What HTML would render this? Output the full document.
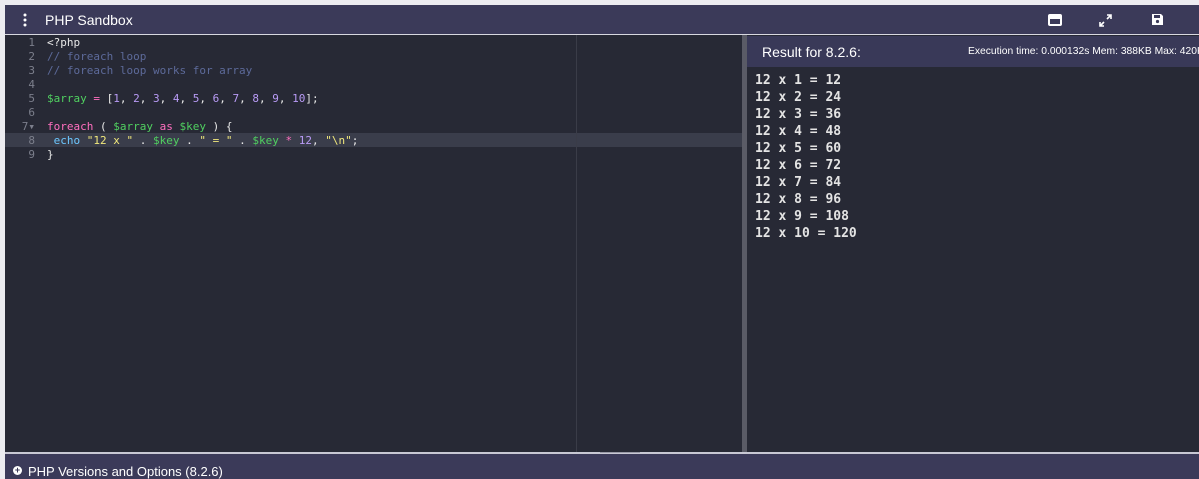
<!DOCTYPE html>
<html><head><style>
body{margin:0;width:1199px;height:477px;background:#ececf0;overflow:hidden;position:relative;font-family:"Liberation Sans",sans-serif}
.hdr{position:absolute;left:5px;top:5px;width:1194px;height:29px;background:#3b3a59;color:#fff}
.hdr .t{position:absolute;left:40px;top:7px;font-size:14px}
.sep{position:absolute;left:5px;top:34px;width:1194px;height:1px;background:#d8d8e0}
.ed{position:absolute;left:5px;top:35px;width:737px;height:417px;background:#272935}
.code{position:absolute;left:0;top:1px;font:11px/14px "DejaVu Sans Mono",monospace;color:#e8e8e8;white-space:pre}
.ln{display:inline-block;width:30px;text-align:right;color:#7c7f8c;margin-right:12px}
.cm{color:#5d6a9a}.v{color:#50d060}.n{color:#b99bf6}.k{color:#ff6fbf}.s{color:#f1e87c}
.hl{position:absolute;left:0;top:98px;width:737px;height:14px;background:#3a3d4b}
.margin{position:absolute;left:571px;top:0;width:1px;height:417px;background:#3a3c48}
.split{position:absolute;left:742px;top:35px;width:5px;height:417px;background:#5a5b66}
.res{position:absolute;left:747px;top:35px;width:452px;height:417px;background:#272935}
.rh{position:absolute;left:0;top:1px;width:452px;height:31px;background:#393958;color:#fff}
.out{position:absolute;left:8px;top:37px;font:bold 13px/17px "DejaVu Sans Mono",monospace;color:#e4e4e4;white-space:pre}
.bot{position:absolute;left:5px;top:452px;width:1194px;height:25px;background:#3b3a59;border-top:2px solid #c8c8d4;color:#fff;font-size:13px}
</style></head><body>
<div class="hdr">
<svg style="position:absolute;left:18px;top:8px" width="4" height="14"><circle cx="2" cy="2" r="1.5" fill="#fff"/><circle cx="2" cy="7" r="1.5" fill="#fff"/><circle cx="2" cy="12" r="1.5" fill="#fff"/></svg>
<div class="t">PHP Sandbox</div>
<svg style="position:absolute;left:1043px;top:9px" width="14" height="12"><rect x="0" y="0" width="14" height="12" rx="2" fill="#fff"/><rect x="2" y="5" width="10" height="5" fill="#3b3a59"/></svg>
<svg style="position:absolute;left:1094px;top:9px" width="13" height="13"><path d="M8 1h4v4M12 1L8 5M5 12H1V8M1 12l4-4" stroke="#fff" stroke-width="1.6" fill="none"/></svg>
<svg style="position:absolute;left:1146px;top:8px" width="13" height="13"><path d="M1 1h9l2 2v9H1z" fill="#fff"/><rect x="3" y="2" width="6" height="3" fill="#3b3a59"/><circle cx="6.5" cy="8.5" r="1.6" fill="#3b3a59"/></svg>
</div>
<div class="sep"></div>
<div class="ed">
<div class="hl"></div><div class="margin"></div>
<div class="code"><span class="ln">1</span>&lt;?php
<span class="ln">2</span><span class="cm">// foreach loop</span>
<span class="ln">3</span><span class="cm">// foreach loop works for array</span>
<span class="ln">4</span>
<span class="ln">5</span><span class="v">$array</span> <span class="k">=</span> [<span class="n">1</span>, <span class="n">2</span>, <span class="n">3</span>, <span class="n">4</span>, <span class="n">5</span>, <span class="n">6</span>, <span class="n">7</span>, <span class="n">8</span>, <span class="n">9</span>, <span class="n">10</span>];
<span class="ln">6</span>
<span class="ln">7▾</span><span class="k">foreach</span> ( <span class="v">$array</span> <span class="k">as</span> <span class="v">$key</span> ) {
<span class="ln">8</span> <span class="k" style="color:#6cc7ff">echo</span> <span class="s">"12 x "</span> . <span class="v">$key</span> . <span class="s">" = "</span> . <span class="v">$key</span> <span class="k">*</span> <span class="n">12</span>, <span class="s">"\n"</span>;
<span class="ln">9</span>}</div>
</div>
<div class="split"></div>
<div class="res">
<div class="rh"><span style="position:absolute;left:15px;top:8px;font-size:14px">Result for 8.2.6:</span><span style="position:absolute;left:221px;top:10px;font-size:10.3px;white-space:nowrap">Execution time: 0.000132s Mem: 388KB Max: 420KB</span></div>
<div class="out">12 x 1 = 12
12 x 2 = 24
12 x 3 = 36
12 x 4 = 48
12 x 5 = 60
12 x 6 = 72
12 x 7 = 84
12 x 8 = 96
12 x 9 = 108
12 x 10 = 120</div>
</div>
<div class="bot"><span style="position:absolute;left:8px;top:12px;width:9px;height:9px;border-radius:50%;background:#fff;color:#3b3a59;font:bold 9px/9px sans-serif;text-align:center">+</span><span style="position:absolute;left:23px;top:10px">PHP Versions and Options (8.2.6)</span></div>
<div style="position:absolute;left:600px;top:452px;width:40px;height:1px;background:#9a9aa8"></div>
</body></html>
